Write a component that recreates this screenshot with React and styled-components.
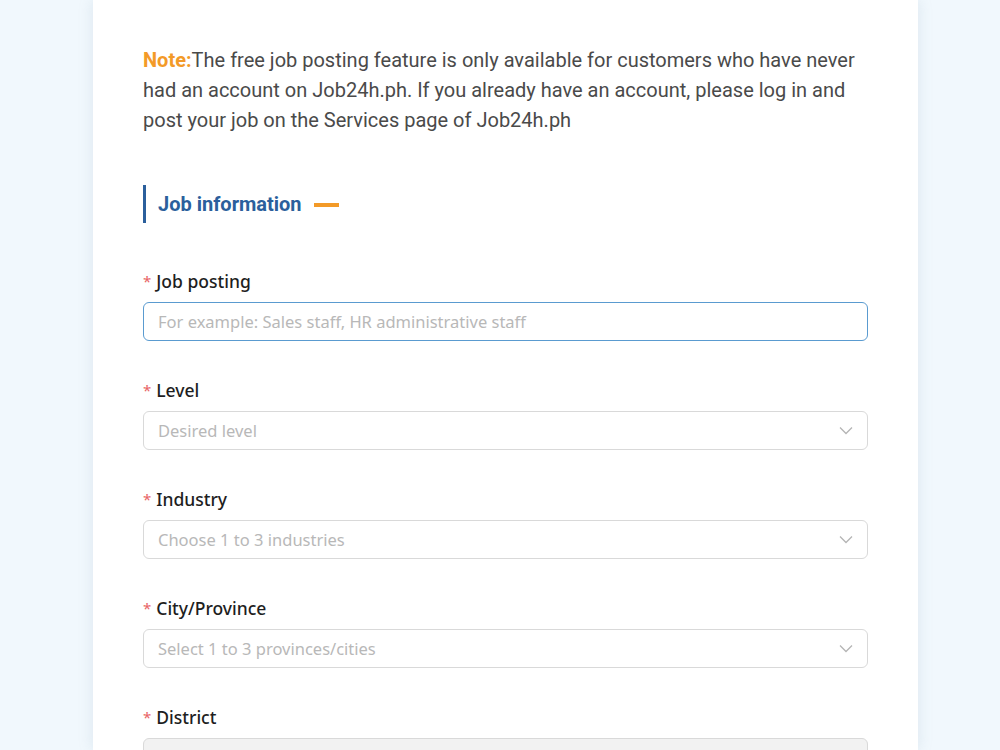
import React from "react";
import styled, { createGlobalStyle } from "styled-components";

const GlobalStyle = createGlobalStyle`
  html, body {
    margin: 0;
    padding: 0;
    background: #f1f8fd;
    overflow: hidden;
  }
`;

const Page = styled.div`
  display: flex;
  justify-content: flex-start;
  padding-left: 93px;
  height: 750px;
`;

const Card = styled.main`
  width: 825px;
  box-sizing: border-box;
  background: #fff;
  padding: 45px 50px 0;
  box-shadow: 0 0 14px rgba(120, 150, 170, 0.18);
`;

const Note = styled.p`
  margin: 0;
  font-family: Roboto, "Liberation Sans", sans-serif;
  font-size: 20px;
  line-height: 30px;
  color: #4a4a4a;
  white-space: nowrap;
  span {
    color: #f39a28;
    font-weight: 700;
  }
`;

const SectionTitle = styled.div`
  display: flex;
  align-items: center;
  gap: 12px;
  margin-top: 50px;
  height: 38px;
  border-left: 3px solid #2b5f9c;
  padding-left: 12px;
  h2 {
    margin: 0;
    font-family: Roboto, "Liberation Sans", sans-serif;
    font-size: 20px;
    font-weight: 700;
    color: #2b5f9c;
  }
  i {
    display: block;
    width: 25px;
    height: 4px;
    background: #f39a28;
    margin-top: 2px;
  }
`;

const Fields = styled.div`
  display: flex;
  flex-direction: column;
  gap: 37px;
  margin-top: 46px;
`;

const Field = styled.div`
  display: flex;
  flex-direction: column;
  gap: 9px;
`;

const Label = styled.label`
  display: flex;
  align-items: center;
  gap: 5px;
  height: 24px;
  font-family: "Noto Sans", "Open Sans", sans-serif;
  font-size: 17.5px;
  font-weight: 500;
  color: #1e1e1e;
  b {
    color: #e86466;
    font-weight: 400;
    font-size: 15px;
  }
`;

const Box = styled.div`
  display: flex;
  align-items: center;
  justify-content: space-between;
  height: 39px;
  box-sizing: border-box;
  padding: 0 14px;
  border: 1px solid ${(p) => (p.$focus ? "#5a9bd0" : "#d9d9d9")};
  border-radius: 6px;
  background: ${(p) => (p.$disabled ? "#f2f2f2" : "#fff")};
  font-family: "Noto Sans", "Open Sans", sans-serif;
  font-size: 16.5px;
  color: #b8b8b8;
`;

const Chevron = () => (
  <svg width="14" height="9" viewBox="0 0 14 9" fill="none">
    <path d="M1 1.5l6 6 6-6" stroke="#b5b5b5" strokeWidth="1.3" />
  </svg>
);

const fields = [
  { label: "Job posting", placeholder: "For example: Sales staff, HR administrative staff", focus: true },
  { label: "Level", placeholder: "Desired level", select: true },
  { label: "Industry", placeholder: "Choose 1 to 3 industries", select: true },
  { label: "City/Province", placeholder: "Select 1 to 3 provinces/cities", select: true },
  { label: "District", placeholder: "", select: true, disabled: true },
];

export default function App() {
  return (
    <Page>
      <GlobalStyle />
      <Card>
        <Note>
          <span>Note:</span>The free job posting feature is only available for customers who have never
          <br />
          had an account on Job24h.ph. If you already have an account, please log in and
          <br />
          post your job on the Services page of Job24h.ph
        </Note>

        <SectionTitle>
          <h2>Job information</h2>
          <i />
        </SectionTitle>

        <Fields>
          {fields.map((f) => (
            <Field key={f.label}>
              <Label>
                <b>*</b>
                {f.label}
              </Label>
              <Box $focus={f.focus} $disabled={f.disabled}>
                <span>{f.placeholder}</span>
                {f.select && <Chevron />}
              </Box>
            </Field>
          ))}
        </Fields>
      </Card>
    </Page>
  );
}
